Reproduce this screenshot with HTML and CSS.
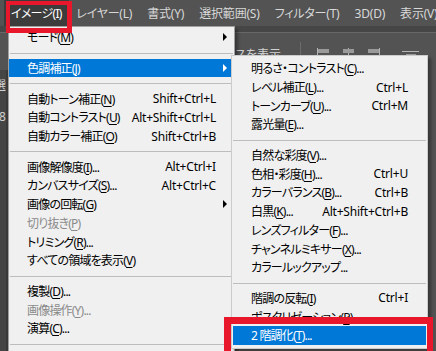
FILE: index.html
```html
<!DOCTYPE html>
<html>
<head>
	<meta charset="UTF-8">
	<title>イメージ - 色調補正</title>
	<link rel="stylesheet" href="styles.css">
</head>
<body>
	<div id="app">
		<div id="menubar">
			<span class="mb-item aberto">イメージ(I)</span>
			<span class="mb-item">レイヤー(L)</span>
			<span class="mb-item">書式(Y)</span>
			<span class="mb-item">選択範囲(S)</span>
			<span class="mb-item">フィルター(T)</span>
			<span class="mb-item">3D(D)</span>
			<span class="mb-item">表示(V)</span>
		</div>

		<div id="opcoes">
			<div class="opt-label">バウンディングボックスを表示</div>
			<span class="opt-divisor"></span>
			<div class="opt-icones">
				<svg width="14" height="16" viewBox="0 0 14 16">
					<rect x="0" y="2" width="1" height="14" fill="#b4b4b4"/>
					<rect x="1" y="3" width="11" height="4" fill="#9a9a9a"/>
					<rect x="1" y="10" width="8" height="4" fill="#9a9a9a"/>
				</svg>
				<svg width="14" height="16" viewBox="0 0 14 16">
					<rect x="6" y="2" width="1" height="14" fill="#b4b4b4"/>
					<rect x="1" y="3" width="11" height="4" fill="#9a9a9a"/>
					<rect x="2.5" y="10" width="8" height="4" fill="#9a9a9a"/>
				</svg>
				<svg width="14" height="16" viewBox="0 0 14 16">
					<rect x="12" y="2" width="1" height="14" fill="#b4b4b4"/>
					<rect x="1" y="3" width="11" height="4" fill="#9a9a9a"/>
					<rect x="4" y="10" width="8" height="4" fill="#9a9a9a"/>
				</svg>
				<svg class="icone-topo" width="18" height="16" viewBox="0 0 18 16">
					<rect x="0" y="5" width="17" height="1" fill="#b4b4b4"/>
					<rect x="4" y="8" width="10" height="4" fill="#9a9a9a"/>
				</svg>
			</div>
		</div>

		<div id="area">
			<div id="ferramentas">
				<span class="ferr-texto">選</span>
				<span class="ferr-num">8</span>
			</div>
			<div id="documento"></div>
			<div id="painel"></div>
		</div>

		<!-- menu Imagem -->
		<div class="menu" id="menu-imagem">
			<div class="item"><span>モード(<u>M</u>)</span><span></span><i class="seta"></i></div>
			<div class="sep"></div>
			<div class="item ativo"><span>色調補正(<u>J</u>)</span><span></span><i class="seta"></i></div>
			<div class="sep"></div>
			<div class="item"><span>自動トーン補正(<u>N</u>)</span><span>Shift+Ctrl+L</span><span></span></div>
			<div class="item"><span>自動コントラスト(<u>U</u>)</span><span>Alt+Shift+Ctrl+L</span><span></span></div>
			<div class="item"><span>自動カラー補正(<u>O</u>)</span><span>Shift+Ctrl+B</span><span></span></div>
			<div class="sep"></div>
			<div class="item"><span>画像解像度(<u>I</u>)...</span><span>Alt+Ctrl+I</span><span></span></div>
			<div class="item"><span>カンバスサイズ(<u>S</u>)...</span><span>Alt+Ctrl+C</span><span></span></div>
			<div class="item"><span>画像の回転(<u>G</u>)</span><span></span><i class="seta"></i></div>
			<div class="item desativado"><span>切り抜き(<u>P</u>)</span><span></span><span></span></div>
			<div class="item"><span>トリミング(<u>R</u>)...</span><span></span><span></span></div>
			<div class="item"><span>すべての領域を表示(<u>V</u>)</span><span></span><span></span></div>
			<div class="sep"></div>
			<div class="item"><span>複製(<u>D</u>)...</span><span></span><span></span></div>
			<div class="item desativado"><span>画像操作(<u>Y</u>)...</span><span></span><span></span></div>
			<div class="item"><span>演算(<u>C</u>)...</span><span></span><span></span></div>
			<div class="sep"></div>
		</div>

		<!-- submenu Correcao de cor -->
		<div class="menu" id="menu-cor">
			<div class="item"><span>明るさ・コントラスト(<u>C</u>)...</span><span></span><span></span></div>
			<div class="item"><span>レベル補正(<u>L</u>)...</span><span>Ctrl+L</span><span></span></div>
			<div class="item"><span>トーンカーブ(<u>U</u>)...</span><span>Ctrl+M</span><span></span></div>
			<div class="item"><span>露光量(<u>E</u>)...</span><span></span><span></span></div>
			<div class="sep"></div>
			<div class="item"><span>自然な彩度(<u>V</u>)...</span><span></span><span></span></div>
			<div class="item"><span>色相・彩度(<u>H</u>)...</span><span>Ctrl+U</span><span></span></div>
			<div class="item"><span>カラーバランス(<u>B</u>)...</span><span>Ctrl+B</span><span></span></div>
			<div class="item"><span>白黒(<u>K</u>)...</span><span>Alt+Shift+Ctrl+B</span><span></span></div>
			<div class="item"><span>レンズフィルター(<u>F</u>)...</span><span></span><span></span></div>
			<div class="item"><span>チャンネルミキサー(<u>X</u>)...</span><span></span><span></span></div>
			<div class="item"><span>カラールックアップ...</span><span></span><span></span></div>
			<div class="sep"></div>
			<div class="item"><span>階調の反転(<u>I</u>)</span><span>Ctrl+I</span><span></span></div>
			<div class="item"><span>ポスタリゼーション(<u>P</u>)...</span><span></span><span></span></div>
			<div class="item ativo"><span>2 階調化(<u>T</u>)...</span><span></span><span></span></div>
		</div>

		<!-- marcacoes vermelhas -->
		<div class="marca" id="marca-menu"></div>
		<div class="marca" id="marca-item"></div>
	</div>
</body>
</html>
```

FILE: styles.css
```css
* {
	box-sizing: border-box;
}

body {
	margin: 0;
	background-color: #535353;
	font-family: "Noto Sans", "Noto Sans CJK JP", sans-serif;
	font-size: 12px;
	font-feature-settings: "palt";
}

#app {
	position: relative;
	width: 436px;
	height: 351px;
	overflow: hidden;
	display: flex;
	flex-direction: column;
}

/* barra de menus */
#menubar {
	display: flex;
	height: 26px;
	padding-left: 4px;
	background-color: #535353;
	color: #d8d8d8;
}

.mb-item {
	display: flex;
	align-items: center;
	padding: 0 7.5px;
	white-space: nowrap;
	letter-spacing: -0.2px;
}

.mb-item.aberto {
	padding: 0 7px;
	background-color: #3c3c3c;
	color: #fff;
	letter-spacing: -0.7px;
}

/* barra de opcoes */
#opcoes {
	display: flex;
	align-items: center;
	height: 44px;
	padding-top: 6px;
	background-color: #535353;
	border-top: 6px solid #464646;
	box-shadow: inset 0 1px 0 #686868;
	color: #d2d2d2;
}

.opt-label {
	width: 281px;
	text-align: right;
	white-space: nowrap;
	overflow: hidden;
}

.opt-divisor {
	width: 1px;
	height: 24px;
	margin-left: 19px;
	background-color: #6b6b6b;
}

.opt-icones {
	display: flex;
	gap: 11px;
	margin-left: 16px;
}

.opt-icones .icone-topo {
	margin-left: 10px;
}

#area {
	flex-grow: 1;
	display: flex;
}

#ferramentas {
	width: 8px;
	display: flex;
	flex-direction: column;
	background-color: #454545;
	color: #cfcfcf;
	overflow: hidden;
	border-right: 2px solid #3a3a3a;
}

.ferr-texto {
	margin: 6px 0 0 -6px;
}

.ferr-num {
	margin: 14px 0 0 -1px;
}

#documento {
	flex-grow: 1;
	background-color: #5a5a5a;
}

#painel {
	width: 8px;
	background-color: #535353;
}

/* menus */
.menu {
	position: absolute;
	background-color: #f0f0f0;
	border: 1px solid #a0a0a0;
	color: #000;
	box-shadow: 3px 3px 3px rgba(0, 0, 0, .35);
}

#menu-imagem {
	left: 8px;
	top: 26px;
	width: 227px;
	padding: 1px 0;
}

#menu-cor {
	left: 231px;
	top: 55px;
	width: 197px;
	padding: 3px 0;
	border-color: #cccccc;
}

.item {
	display: grid;
	grid-template-columns: 1fr auto 18px;
	align-items: center;
	height: 18.7px;
	padding-left: 18px;
	white-space: nowrap;
}

.item span:first-child {
	letter-spacing: -0.8px;
}

.item span:nth-child(2) {
	letter-spacing: -0.2px;
}

#menu-cor .item {
	margin: 0 1px;
}

.item u {
	text-decoration-thickness: 1px;
	text-underline-offset: 2px;
}

.item.ativo {
	background-color: #0078d7;
	color: #fff;
}

.item.desativado {
	color: #8a8a8a;
}

.seta {
	justify-self: center;
	width: 0;
	height: 0;
	border-top: 4px solid transparent;
	border-bottom: 4px solid transparent;
	border-left: 4px solid #000;
}

.item.ativo .seta {
	border-left-color: #fff;
}

.sep {
	height: 1px;
	margin: 6px 1px 5px;
	background-color: #bdbdbd;
}

/* marcacoes */
.marca {
	position: absolute;
	border-style: solid;
	border-color: #e8172b;
}

#marca-menu {
	left: 6px;
	top: 1px;
	width: 66px;
	height: 32px;
	border-width: 4px 5px 5px 4px;
}

#marca-item {
	left: 224px;
	top: 317px;
	width: 209px;
	height: 60px;
	border-width: 7px 6px 7px 7px;
}
```
